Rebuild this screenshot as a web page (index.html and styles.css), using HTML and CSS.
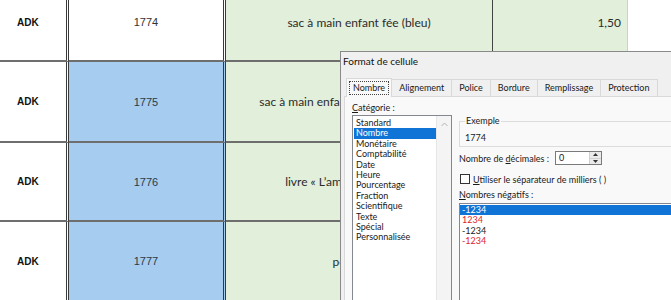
FILE: index.html
```html
<!DOCTYPE html>
<html lang="fr">
<head>
    <meta charset="UTF-8">
    <title>Format de cellule</title>
    <link rel="stylesheet" href="styles.css">
</head>
<body>

<div class="sheet">
    <div class="c code">ADK</div>
    <div class="c ref">1774</div>
    <div class="c label">sac à main enfant fée (bleu)</div>
    <div class="c price">1,50</div>
    <div class="c empty"></div>

    <div class="c code">ADK</div>
    <div class="c ref sel">1775</div>
    <div class="c label">sac à main enfant fée (rose et argenté)</div>
    <div class="c price">2,00</div>
    <div class="c empty"></div>

    <div class="c code">ADK</div>
    <div class="c ref sel">1776</div>
    <div class="c label">livre « L’amour des licornes »</div>
    <div class="c price">3,50</div>
    <div class="c empty"></div>

    <div class="c code">ADK</div>
    <div class="c ref sel">1777</div>
    <div class="c label">porte-clés</div>
    <div class="c price">4,00</div>
    <div class="c empty"></div>
</div>

<div class="dialog">
    <div class="dlg-title">Format de cellule</div>

    <div class="tabs">
        <span class="tab active"><span class="focus">Nombre</span></span>
        <span class="tab">Alignement</span>
        <span class="tab">Police</span>
        <span class="tab">Bordure</span>
        <span class="tab">Remplissage</span>
        <span class="tab">Protection</span>
    </div>

    <div class="page">
        <div class="col-left">
            <div class="field-label"><u>C</u>atégorie :</div>
            <div class="listbox cat-list">
                <ul>
                    <li>Standard</li>
                    <li class="selected">Nombre</li>
                    <li>Monétaire</li>
                    <li>Comptabilité</li>
                    <li>Date</li>
                    <li>Heure</li>
                    <li>Pourcentage</li>
                    <li>Fraction</li>
                    <li>Scientifique</li>
                    <li>Texte</li>
                    <li>Spécial</li>
                    <li>Personnalisée</li>
                </ul>
                <div class="scrollbar">
                    <svg width="7" height="5" viewBox="0 0 7 5"><path d="M0.5 4 L3.5 1 L6.5 4" fill="none" stroke="#b4b4b4" stroke-width="1"/></svg>
                </div>
            </div>
        </div>

        <div class="col-right">
            <fieldset class="sample">
                <legend>Exemple</legend>
                <div class="sample-value">1774</div>
            </fieldset>

            <div class="decimals">
                <span class="dec-label">Nombre de <u>d</u>écimales :</span>
                <span class="spin">
                    <span class="spin-value">0</span>
                    <span class="spin-btns">
                        <span class="spin-btn"><svg width="5" height="3" viewBox="0 0 5 3"><path d="M0 3 L2.5 0 L5 3 Z" fill="#333"/></svg></span>
                        <span class="spin-btn"><svg width="5" height="3" viewBox="0 0 5 3"><path d="M0 0 L2.5 3 L5 0 Z" fill="#333"/></svg></span>
                    </span>
                </span>
            </div>

            <div class="check-row">
                <span class="checkbox"></span>
                <span><u>U</u>tiliser le séparateur de milliers ( )</span>
            </div>

            <div class="field-label neg-label"><u>N</u>ombres négatifs :</div>
            <div class="listbox neg-list">
                <ul>
                    <li class="selected">-1234</li>
                    <li class="red">1234</li>
                    <li>-1234</li>
                    <li class="red">-1234</li>
                </ul>
            </div>
        </div>
    </div>
</div>

</body>
</html>
```

FILE: styles.css
```css
:root {
    --grid-line: #6e6e6e;
    --green: #e2efda;
    --blue: #a6cdf0;
    --dlg-bg: #f0f0f0;
    --page-bg: #f9f9f9;
    --tab-border: #d9d9d9;
    --list-border: #828790;
    --highlight: #0f74d6;
    --red: #e0242e;
}
body {
    margin: 0;
    width: 671px;
    height: 300px;
    overflow: hidden;
    position: relative;
    background: #fff;
}

/* feuille de calcul */
.sheet {
    display: grid;
    grid-template-columns: 69px 157px 267px 135px 1fr;
    grid-template-rows: 78px 81px 79px 80px;
    margin-top: -16px;
}
.c {
    box-sizing: border-box;
    display: flex;
    align-items: center;
    justify-content: center;
    border-bottom: 2px solid var(--grid-line);
    font-family: Lato, sans-serif;
    font-size: 12px;
    color: #2b2b2b;
    white-space: nowrap;
    overflow: hidden;
}
.code {
    justify-content: flex-start;
    padding-left: 17px;
    font-family: "Liberation Sans", Arial, sans-serif;
    font-weight: bold;
    font-size: 10px;
    color: #111;
    border-right: 3px double #3a3a3a;
}
.ref {
    font-family: "Liberation Sans", Arial, sans-serif;
    font-size: 11px;
    color: #333;
    border-right: 3px double #3a3a3a;
}
.ref.sel { background: var(--blue); color: #2a3a4a; }
.label {
    background: var(--green);
    border-right: 1px solid #444;
}
.price {
    background: var(--green);
    justify-content: flex-end;
    padding-right: 6px;
    border-right: 1px solid #d0d0d0;
}
.empty { border-bottom-color: #d8d8d8; }

/* boîte de dialogue */
.dialog {
    position: absolute;
    left: 340px;
    top: 51px;
    right: -20px;
    bottom: -20px;
    background: var(--dlg-bg);
    border: 1px solid #8a8a8a;
    font-family: Lato, sans-serif;
    font-size: 9px;
    color: #1a1a1a;
}
.dlg-title {
    height: 21px;
    line-height: 19px;
    padding-left: 2px;
    font-size: 10px;
    color: #111;
}
.tabs {
    display: flex;
    margin-top: 5px;
    padding-left: 6px;
    height: 18px;
    position: relative;
    z-index: 1;
}
.tab {
    box-sizing: border-box;
    height: 17px;
    margin-top: 1px;
    padding: 0 7px;
    line-height: 15px;
    border: 1px solid var(--tab-border);
    border-bottom: 0;
    margin-left: -1px;
    background: var(--dlg-bg);
}
.tab.active {
    height: 19px;
    margin-top: 0;
    padding: 2px 2px 0;
    background: var(--page-bg);
}
.focus {
    display: block;
    border: 1px dotted #444;
    padding: 0 3px;
    line-height: 12px;
}
.page {
    display: flex;
    margin-left: 3px;
    height: 300px;
    padding: 5px 0 0 7px;
    background: var(--page-bg);
    border: 1px solid var(--tab-border);
}
.field-label { line-height: 11px; height: 11px; }
.col-left { width: 101px; flex: none; }
.listbox {
    box-sizing: border-box;
    background: #fff;
    border: 1px solid var(--list-border);
}
.listbox ul {
    list-style: none;
    margin: 0;
    padding: 2px 0 0 1px;
    flex: 1;
}
.listbox li {
    line-height: 10.4px;
    height: 10.4px;
    padding-left: 2px;
}
.listbox li.selected { background: var(--highlight); color: #fff; }
.cat-list {
    display: flex;
    margin-top: 2px;
    width: 100px;
    height: 200px;
}
.scrollbar {
    width: 14px;
    background: #f4f4f4;
    border-left: 1px solid #e6e6e6;
    display: flex;
    justify-content: center;
    padding-top: 6px;
}
.col-right {
    flex: 1;
    margin-left: 6px;
    padding-top: 13px;
}
.sample {
    margin: 0;
    padding: 5px 5px 2px;
    border: 1px solid #dcdcdc;
}
.sample legend { padding: 0 1px; line-height: 12px; }
.sample-value { line-height: 12px; }
.decimals {
    display: flex;
    align-items: center;
    margin-top: 4px;
    height: 14px;
}
.dec-label { width: 96px; flex: none; }
.spin {
    box-sizing: border-box;
    display: flex;
    width: 47px;
    height: 14px;
    background: #fff;
    border: 1px solid #7a7a7a;
}
.spin-value { flex: 1; padding-left: 3px; line-height: 12px; }
.spin-btns {
    display: flex;
    flex-direction: column;
    width: 11px;
    border-left: 1px solid #d0d0d0;
}
.spin-btn {
    flex: 1;
    display: flex;
    align-items: center;
    justify-content: center;
    background: #eaeaea;
}
.spin-btn + .spin-btn { border-top: 1px solid #d0d0d0; }
.check-row {
    display: flex;
    align-items: center;
    margin-top: 9px;
    height: 10px;
}
.checkbox {
    box-sizing: border-box;
    width: 10px;
    height: 10px;
    margin: 0 3px 0 1px;
    background: #fff;
    border: 1px solid #333;
}
.neg-label { margin-top: 5px; line-height: 12px; height: 12px; }
.neg-list {
    margin-top: 2px;
    height: 120px;
}
.neg-list ul { padding: 1px 0 0; }
.neg-list li { padding-left: 2px; }
.neg-list li.red { color: var(--red); }
```
